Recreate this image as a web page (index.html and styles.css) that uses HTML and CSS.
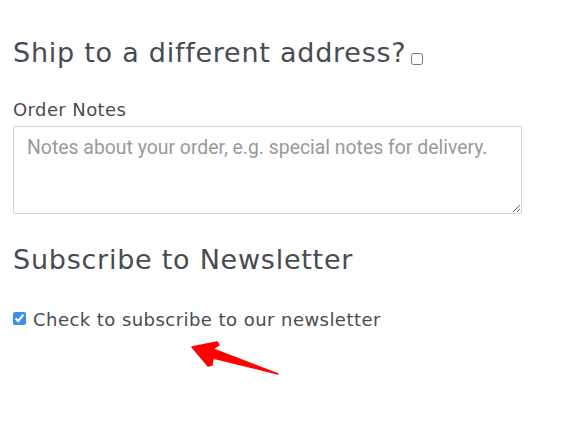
FILE: index.html
```html
<!DOCTYPE html>
<html>
<head>
<meta charset="utf-8">
<link rel="stylesheet" href="styles.css">
</head>
<body>
<div class="wrap">
  <h3 class="title">Ship to a different address? <input type="checkbox" class="ship-check"></h3>
  <label class="label" for="notes">Order Notes</label>
  <textarea id="notes" class="notes" placeholder="Notes about your order, e.g. special notes for delivery."></textarea>
  <h3 class="title title-news">Subscribe to Newsletter</h3>
  <label class="sub"><input type="checkbox" class="sub-check" checked> Check to subscribe to our newsletter</label>
</div>
<svg class="arrow" width="100" height="50" viewBox="0 0 100 50">
  <path d="M7 12 L32 7 L34 10 L28 14 L93 39 L28 23 L27 30 L23 31 Z" fill="#f00" stroke="#f00" stroke-width="1.5" stroke-linejoin="round"/>
</svg>
</body>
</html>
```
FILE: styles.css
```css
html, body { margin: 0; padding: 0; background: #fff; }
body { position: relative; width: 567px; height: 421px; overflow: hidden; font-family: "DejaVu Sans", sans-serif; color: #474c52; }
.wrap { padding: 33px 13px 0; display: flex; flex-direction: column; align-items: flex-start; }
.title { margin: 0; font-weight: normal; font-size: 27px; line-height: 40px; letter-spacing: 0.75px; display: flex; align-items: center; }
.ship-check { width: 12px; height: 12px; margin: 12px 0 0 5px; accent-color: #3b8ff0; }
.label { margin-top: 27px; font-size: 18px; line-height: 20px; letter-spacing: 0.4px; }
.notes { margin-top: 6px; box-sizing: border-box; width: 509px; height: 88px; border: 1px solid #d2d2d2; border-radius: 2px; padding: 9px 13px; font-family: Roboto, sans-serif; font-size: 19.4px; color: #555; resize: both; }
.notes::placeholder { color: #9a9a9a; }
.title-news { margin-top: 26px; }
.sub { margin-top: 29px; font-size: 18px; line-height: 22px; letter-spacing: 0.45px; display: flex; align-items: center; }
.sub-check { width: 13px; height: 13px; margin: 0 7px 3px 0; accent-color: #3b8ff0; }
.arrow { position: absolute; left: 185px; top: 335px; }
```
